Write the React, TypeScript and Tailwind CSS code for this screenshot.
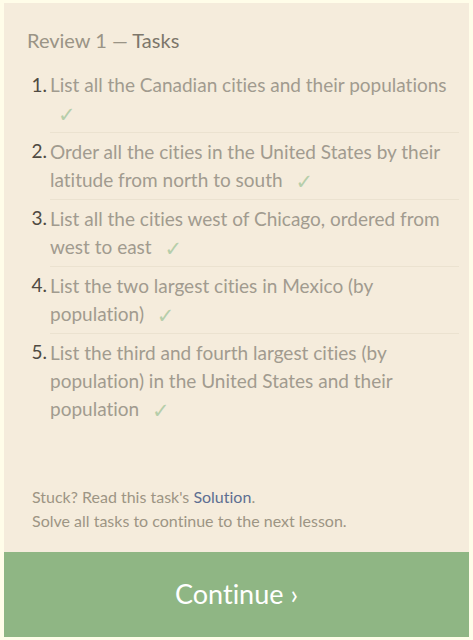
import React from 'react';

const TASKS = [
  'List all the Canadian cities and their populations',
  'Order all the cities in the United States by their latitude from north to south',
  'List all the cities west of Chicago, ordered from west to east',
  'List the two largest cities in Mexico (by population)',
  'List the third and fourth largest cities (by population) in the United States and their population',
];

const font = { fontFamily: '"Lato", "Open Sans", sans-serif' };

export default function App() {
  return (
    <div className="h-[640px] w-full bg-[#fffde9] px-[4px] pt-[3px] pb-[3px] [font-variant-ligatures:none]" style={font}>
      <div className="flex h-full flex-col bg-[#f5ecdc]">
        <h2 className="pl-[23px] pt-[24px] text-[20px] leading-[26px] text-[#9a9486]">
          Review 1 — <span className="text-[#7d776b]">Tasks</span>
        </h2>
        <ol className="mt-[13px] pr-[10px] pl-[25px]">
          {TASKS.map((task, i) => (
            <li key={i} className="flex text-[19px] leading-[28px]">
              <span className="w-[21px] shrink-0 pt-[5px] pr-[3px] text-right text-[#4f4a42]">{i + 1}.</span>
              <div className={`flex-1 py-[5px] text-[#a19b8f] ${i > 0 ? 'border-t border-[#ebe2d0]' : ''}`}>
                {task}{' '}
                <span className="ml-[8px] inline-block h-[20px] align-[-2px] leading-[20px] text-[#b6ceaa]" style={{ fontFamily: '"DejaVu Sans", sans-serif', fontSize: '21px' }}>✓</span>
              </div>
            </li>
          ))}
        </ol>
        <div className="mt-auto pl-[28px] pb-[19px] text-[16px] leading-[24px] text-[#9d9584]">
          <p>
            Stuck? Read this task's <a className="text-[#5d6f92]">Solution</a>.
          </p>
          <p>Solve all tasks to continue to the next lesson.</p>
        </div>
        <button className="flex h-[85px] w-full items-center justify-center bg-[#8fb684] text-[27px] text-white">
          Continue ›
        </button>
      </div>
    </div>
  );
}
